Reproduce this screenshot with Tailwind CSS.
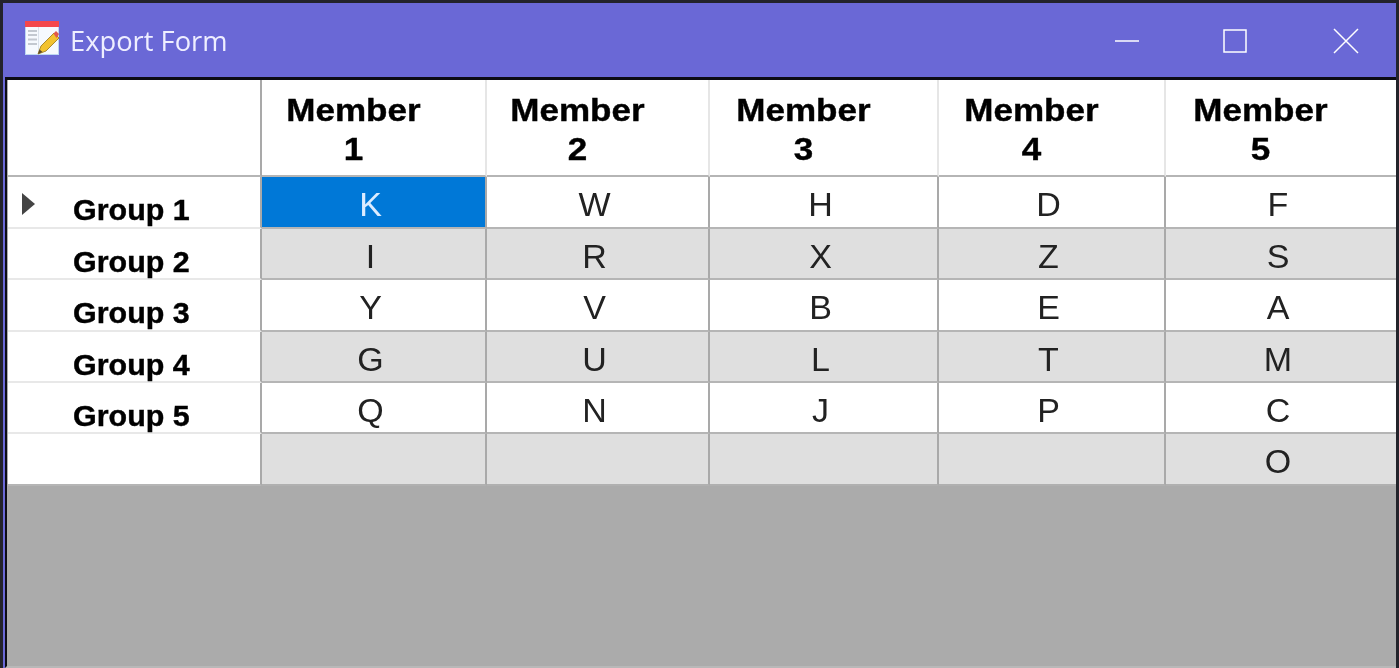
<!DOCTYPE html>
<html lang="en">
<head>
	<meta charset="UTF-8">
	<title>Export Form</title>
	<script src="https://cdn.jsdelivr.net/npm/@tailwindcss/browser@4"></script>
</head>
<body class="w-[1399px] h-[668px] overflow-hidden bg-[#23232b]">
	<div class="h-full pt-[3px] pl-[3px] pr-[3px] flex flex-col blur-[0.5px]">
		<div class="flex-1 min-h-0 flex flex-col bg-[#6a68d6]">
			<!-- title bar -->
			<div class="h-[74px] flex-shrink-0 flex items-center pl-[22px] text-[#eeeeff]">
				<svg class="w-[34px] h-[34px] -mt-[5px]" viewBox="0 0 34 34" aria-hidden="true">
					<rect x="0.500" y="4" width="33" height="29.500" fill="#f6f9fe" stroke="#bcd6f2"/>
					<rect x="0" y="0" width="34" height="6" fill="#f4474c"/>
					<path d="M3 10h9M3 14h9M3 18.500h9M3 23h9" stroke="#c3c8d0" stroke-width="2"/>
					<path d="M13.500 6v27" stroke="#dbe2ec"/>
					<path d="M13 33l3-8 13-13 5 5-13 13z" fill="#f2c230" stroke="#a98a30"/>
					<path d="M28.500 12.500l2.500-2.500 3 3-2.500 4z" fill="#e0584a"/>
					<path d="M13 33l1.500-4.500 3 2.500z" fill="#5a4a2a"/>
				</svg>
				<span class="ml-[11px] text-[27.300px] font-['Open_Sans',sans-serif] mt-[2px]">Export Form</span>
				<div class="ml-auto flex items-center pr-[37px] text-white mt-[2px]">
					<svg class="w-[24px] h-[24px]" viewBox="0 0 24 24" fill="none" stroke="currentColor" stroke-width="1.500"><path d="M0 12h24"/></svg>
					<svg class="w-[24px] h-[24px] ml-[84px]" viewBox="0 0 24 24" fill="none" stroke="currentColor" stroke-width="1.500"><rect x="1" y="1" width="22" height="22"/></svg>
					<svg class="w-[26px] h-[26px] ml-[86px]" viewBox="0 0 26 26" fill="none" stroke="currentColor" stroke-width="1.500"><path d="M1 1l24 24M25 1L1 25"/></svg>
				</div>
			</div>
			<!-- form body -->
			<div class="flex-1 min-h-0 ml-[2px] border-l-[2px] border-t-[3px] border-b-2 border-l-[#0c0c14] border-t-[#0c0c14] border-b-[#b8b8b8] bg-[#ababab] flex flex-col">
				<div class="pl-px">
					<div class="grid grid-cols-[254px_225px_223px_229px_227px_1fr] grid-rows-[97px_52px_51px_52px_51px_51px_52px] font-['Liberation_Sans',sans-serif] text-[#222]">
						<!-- header -->
						<div class="bg-white border-r-2 border-b-[2px] border-r-[#a9a9a9] border-b-[#b5b5b5]"></div>
						<div class="bg-white border-r-2 border-r-[#e6e6e6] border-b-[2px] border-b-[#b5b5b5] pr-[41px] pt-[11px] text-center font-bold text-black text-[31px] leading-[39px] [-webkit-text-stroke:0.4px_black]"><span class="inline-block scale-x-[1.13]">Member<br>1</span></div>
						<div class="bg-white border-r-2 border-r-[#e6e6e6] border-b-[2px] border-b-[#b5b5b5] pr-[41px] pt-[11px] text-center font-bold text-black text-[31px] leading-[39px] [-webkit-text-stroke:0.4px_black]"><span class="inline-block scale-x-[1.13]">Member<br>2</span></div>
						<div class="bg-white border-r-2 border-r-[#e6e6e6] border-b-[2px] border-b-[#b5b5b5] pr-[41px] pt-[11px] text-center font-bold text-black text-[31px] leading-[39px] [-webkit-text-stroke:0.4px_black]"><span class="inline-block scale-x-[1.13]">Member<br>3</span></div>
						<div class="bg-white border-r-2 border-r-[#e6e6e6] border-b-[2px] border-b-[#b5b5b5] pr-[41px] pt-[11px] text-center font-bold text-black text-[31px] leading-[39px] [-webkit-text-stroke:0.4px_black]"><span class="inline-block scale-x-[1.13]">Member<br>4</span></div>
						<div class="bg-white border-b-[2px] border-b-[#b5b5b5] pr-[41px] pt-[11px] text-center font-bold text-black text-[31px] leading-[39px] [-webkit-text-stroke:0.4px_black]"><span class="inline-block scale-x-[1.13]">Member<br>5</span></div>

						<!-- group 1 -->
						<div class="relative bg-white border-r-2 border-r-[#a9a9a9] border-b-2 border-b-[#e8e8e8] pl-[65px] pt-[15px] font-bold text-black text-[29px] leading-[36px] [-webkit-text-stroke:0.4px_black]">
							<span class="absolute left-[14px] top-[16px] border-y-[11px] border-y-transparent border-l-[13px] border-l-[#444]"></span>
							<span class="inline-block origin-left scale-x-[1.05]">Group 1</span>
						</div>
						<div class="bg-[#0078d7] text-[#dcecff] border-r-2 border-r-[#a9a9a9] border-b-2 border-b-[#b5b5b5] flex items-center justify-center pr-[6px] pt-[5px] text-[34px]">K</div>
						<div class="bg-white border-r-2 border-r-[#a9a9a9] border-b-2 border-b-[#b5b5b5] flex items-center justify-center pr-[6px] pt-[5px] text-[34px]">W</div>
						<div class="bg-white border-r-2 border-r-[#a9a9a9] border-b-2 border-b-[#b5b5b5] flex items-center justify-center pr-[6px] pt-[5px] text-[34px]">H</div>
						<div class="bg-white border-r-2 border-r-[#a9a9a9] border-b-2 border-b-[#b5b5b5] flex items-center justify-center pr-[6px] pt-[5px] text-[34px]">D</div>
						<div class="bg-white border-b-2 border-b-[#b5b5b5] flex items-center justify-center pr-[6px] pt-[5px] text-[34px]">F</div>

						<!-- group 2 -->
						<div class="bg-white border-r-2 border-r-[#a9a9a9] border-b-2 border-b-[#e8e8e8] pl-[65px] pt-[15px] font-bold text-black text-[29px] leading-[36px] [-webkit-text-stroke:0.4px_black]"><span class="inline-block origin-left scale-x-[1.05]">Group 2</span></div>
						<div class="bg-[#dfdfdf] border-r-2 border-r-[#a9a9a9] border-b-2 border-b-[#b5b5b5] flex items-center justify-center pr-[6px] pt-[5px] text-[34px]">I</div>
						<div class="bg-[#dfdfdf] border-r-2 border-r-[#a9a9a9] border-b-2 border-b-[#b5b5b5] flex items-center justify-center pr-[6px] pt-[5px] text-[34px]">R</div>
						<div class="bg-[#dfdfdf] border-r-2 border-r-[#a9a9a9] border-b-2 border-b-[#b5b5b5] flex items-center justify-center pr-[6px] pt-[5px] text-[34px]">X</div>
						<div class="bg-[#dfdfdf] border-r-2 border-r-[#a9a9a9] border-b-2 border-b-[#b5b5b5] flex items-center justify-center pr-[6px] pt-[5px] text-[34px]">Z</div>
						<div class="bg-[#dfdfdf] border-b-2 border-b-[#b5b5b5] flex items-center justify-center pr-[6px] pt-[5px] text-[34px]">S</div>

						<!-- group 3 -->
						<div class="bg-white border-r-2 border-r-[#a9a9a9] border-b-2 border-b-[#e8e8e8] pl-[65px] pt-[15px] font-bold text-black text-[29px] leading-[36px] [-webkit-text-stroke:0.4px_black]"><span class="inline-block origin-left scale-x-[1.05]">Group 3</span></div>
						<div class="bg-white border-r-2 border-r-[#a9a9a9] border-b-2 border-b-[#b5b5b5] flex items-center justify-center pr-[6px] pt-[5px] text-[34px]">Y</div>
						<div class="bg-white border-r-2 border-r-[#a9a9a9] border-b-2 border-b-[#b5b5b5] flex items-center justify-center pr-[6px] pt-[5px] text-[34px]">V</div>
						<div class="bg-white border-r-2 border-r-[#a9a9a9] border-b-2 border-b-[#b5b5b5] flex items-center justify-center pr-[6px] pt-[5px] text-[34px]">B</div>
						<div class="bg-white border-r-2 border-r-[#a9a9a9] border-b-2 border-b-[#b5b5b5] flex items-center justify-center pr-[6px] pt-[5px] text-[34px]">E</div>
						<div class="bg-white border-b-2 border-b-[#b5b5b5] flex items-center justify-center pr-[6px] pt-[5px] text-[34px]">A</div>

						<!-- group 4 -->
						<div class="bg-white border-r-2 border-r-[#a9a9a9] border-b-2 border-b-[#e8e8e8] pl-[65px] pt-[15px] font-bold text-black text-[29px] leading-[36px] [-webkit-text-stroke:0.4px_black]"><span class="inline-block origin-left scale-x-[1.05]">Group 4</span></div>
						<div class="bg-[#dfdfdf] border-r-2 border-r-[#a9a9a9] border-b-2 border-b-[#b5b5b5] flex items-center justify-center pr-[6px] pt-[5px] text-[34px]">G</div>
						<div class="bg-[#dfdfdf] border-r-2 border-r-[#a9a9a9] border-b-2 border-b-[#b5b5b5] flex items-center justify-center pr-[6px] pt-[5px] text-[34px]">U</div>
						<div class="bg-[#dfdfdf] border-r-2 border-r-[#a9a9a9] border-b-2 border-b-[#b5b5b5] flex items-center justify-center pr-[6px] pt-[5px] text-[34px]">L</div>
						<div class="bg-[#dfdfdf] border-r-2 border-r-[#a9a9a9] border-b-2 border-b-[#b5b5b5] flex items-center justify-center pr-[6px] pt-[5px] text-[34px]">T</div>
						<div class="bg-[#dfdfdf] border-b-2 border-b-[#b5b5b5] flex items-center justify-center pr-[6px] pt-[5px] text-[34px]">M</div>

						<!-- group 5 -->
						<div class="bg-white border-r-2 border-r-[#a9a9a9] border-b-2 border-b-[#e8e8e8] pl-[65px] pt-[15px] font-bold text-black text-[29px] leading-[36px] [-webkit-text-stroke:0.4px_black]"><span class="inline-block origin-left scale-x-[1.05]">Group 5</span></div>
						<div class="bg-white border-r-2 border-r-[#a9a9a9] border-b-2 border-b-[#b5b5b5] flex items-center justify-center pr-[6px] pt-[5px] text-[34px]">Q</div>
						<div class="bg-white border-r-2 border-r-[#a9a9a9] border-b-2 border-b-[#b5b5b5] flex items-center justify-center pr-[6px] pt-[5px] text-[34px]">N</div>
						<div class="bg-white border-r-2 border-r-[#a9a9a9] border-b-2 border-b-[#b5b5b5] flex items-center justify-center pr-[6px] pt-[5px] text-[34px]">J</div>
						<div class="bg-white border-r-2 border-r-[#a9a9a9] border-b-2 border-b-[#b5b5b5] flex items-center justify-center pr-[6px] pt-[5px] text-[34px]">P</div>
						<div class="bg-white border-b-2 border-b-[#b5b5b5] flex items-center justify-center pr-[6px] pt-[5px] text-[34px]">C</div>

						<!-- new row -->
						<div class="bg-white border-r-2 border-r-[#a9a9a9] border-b-2 border-b-[#b5b5b5]"></div>
						<div class="bg-[#dfdfdf] border-r-2 border-r-[#a9a9a9] border-b-2 border-b-[#b0b0b0]"></div>
						<div class="bg-[#dfdfdf] border-r-2 border-r-[#a9a9a9] border-b-2 border-b-[#b0b0b0]"></div>
						<div class="bg-[#dfdfdf] border-r-2 border-r-[#a9a9a9] border-b-2 border-b-[#b0b0b0]"></div>
						<div class="bg-[#dfdfdf] border-r-2 border-r-[#a9a9a9] border-b-2 border-b-[#b0b0b0]"></div>
						<div class="bg-[#dfdfdf] border-b-2 border-b-[#b0b0b0] flex items-center justify-center pr-[6px] pt-[5px] text-[34px]">O</div>
					</div>
				</div>
			</div>
		</div>
	</div>
</body>
</html>
